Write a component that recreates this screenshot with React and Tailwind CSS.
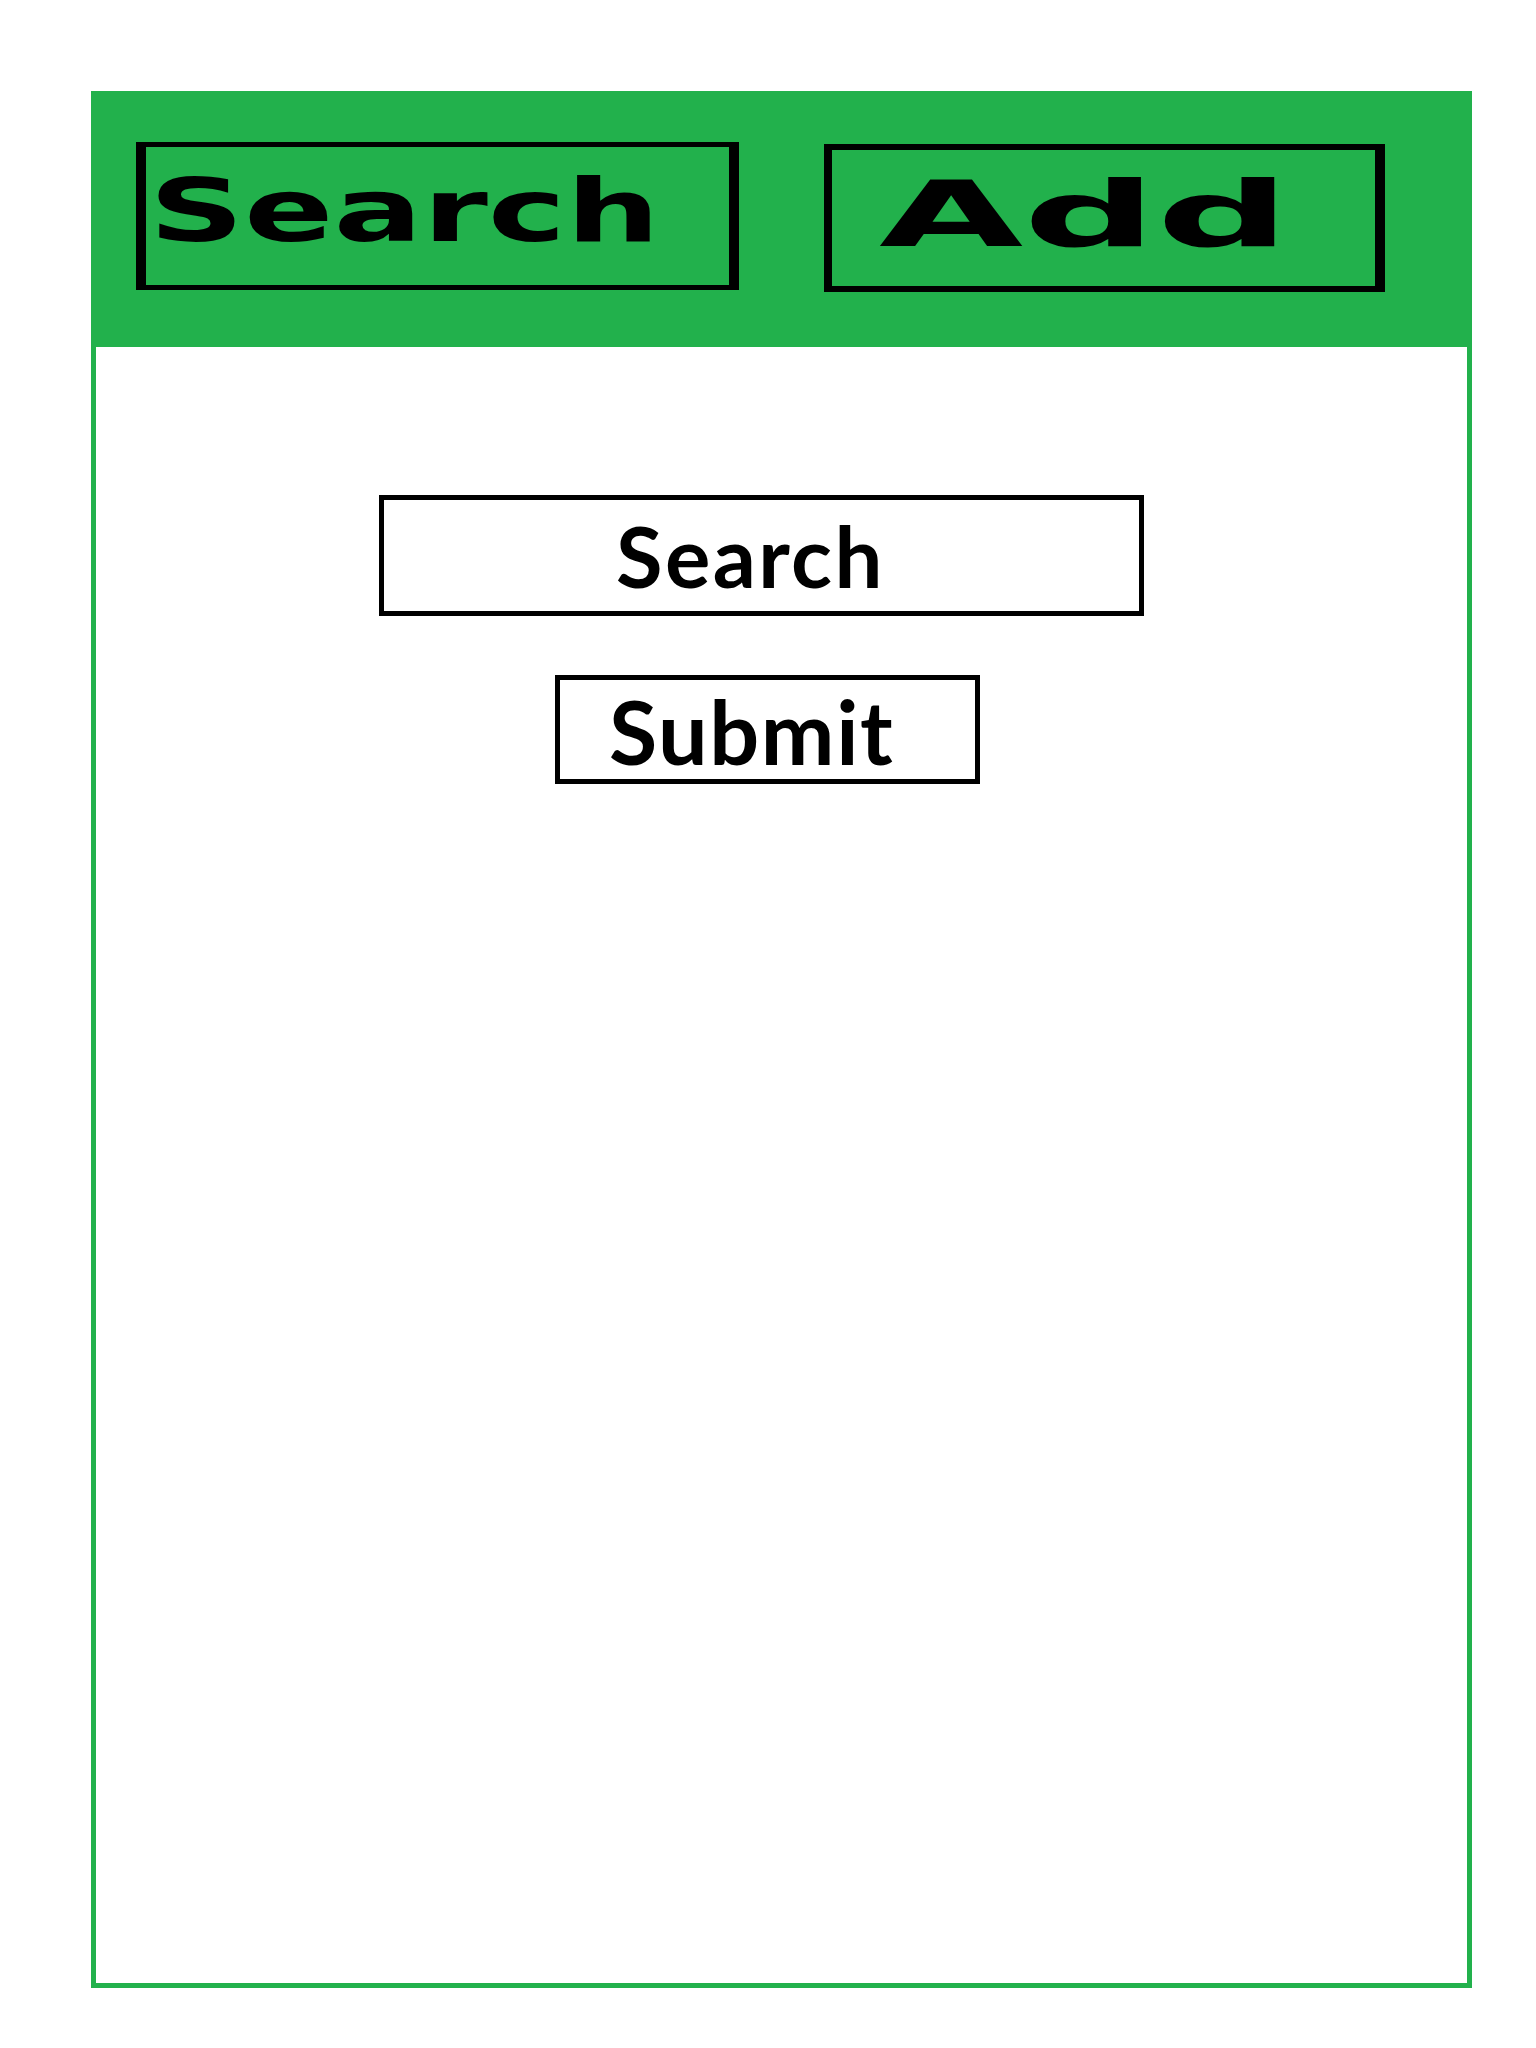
export default function App() {
  return (
    <div className="min-h-[2048px] w-[1536px] bg-white pt-[91px] pl-[91px]">
      <div className="flex h-[1897px] w-[1381px] flex-col border-[5px] border-[#22b14c]">
        <header className="flex h-[251px] items-start bg-[#22b14c] pl-[40px] pt-[46px]">
          <div className="h-[148px] w-[603px] border-x-[10px] border-y-[5px] border-black pl-[3px] pt-[20px] font-['DejaVu_Sans',sans-serif] text-[88px] font-bold leading-none text-black">
            <span className="inline-block origin-left scale-x-[1.5]">Search</span>
          </div>
          <div className="ml-[85px] mt-[2px] h-[148px] w-[561px] border-y-[6px] border-l-[8px] border-r-[10px] border-black pl-[47px] pt-[20px] font-['DejaVu_Sans',sans-serif] text-[90px] font-bold leading-none text-black">
            <span className="inline-block origin-left scale-x-[2.07]">Add</span>
          </div>
        </header>
        <main className="flex flex-col items-start">
          <div className="ml-[283px] mt-[148px] h-[121px] w-[765px] border-[5px] border-black pl-[232px] pt-[13px] font-['Lato',sans-serif] text-[85px] font-bold leading-none tracking-[2.4px] text-black">
            Search
          </div>
          <button className="ml-[459px] mt-[59px] h-[109px] w-[425px] border-[5px] border-black bg-white pl-[49px] pt-[2px] text-left font-['Lato',sans-serif] text-[88px] font-bold leading-none tracking-[1.6px] text-black">
            Submit
          </button>
        </main>
      </div>
    </div>
  );
}
